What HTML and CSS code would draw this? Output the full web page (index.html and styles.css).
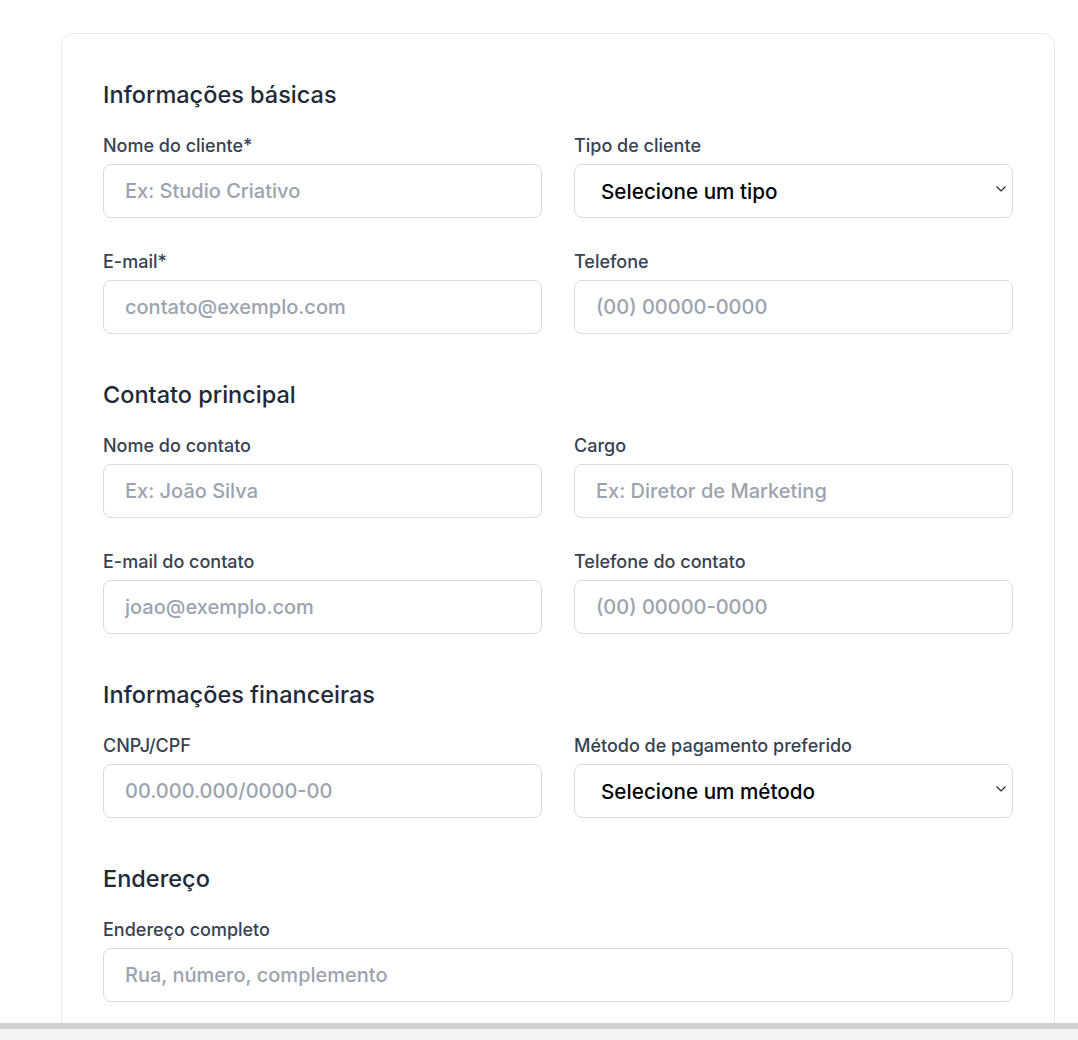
FILE: index.html
```html
<!DOCTYPE html>
<html lang="pt-BR">
<head>
<meta charset="utf-8">
<title>Novo cliente</title>
<link rel="stylesheet" href="styles.css">
</head>
<body>
<main class="card">
  <section class="section">
    <h2 class="section-title">Informações básicas</h2>
    <div class="grid">
      <div class="field">
        <label class="label">Nome do cliente*</label>
        <input class="input" type="text" placeholder="Ex: Studio Criativo">
      </div>
      <div class="field">
        <label class="label">Tipo de cliente</label>
        <div class="select-wrap">
          <select class="select"><option>Selecione um tipo</option></select>
          <svg class="chevron" width="10" height="6" viewBox="0 0 10 6"><path d="M0.5 0.5 L5 5 L9.5 0.5" fill="none" stroke="#222" stroke-width="1.1"/></svg>
        </div>
      </div>
      <div class="field">
        <label class="label">E-mail*</label>
        <input class="input" type="text" placeholder="contato@exemplo.com">
      </div>
      <div class="field">
        <label class="label">Telefone</label>
        <input class="input" type="text" placeholder="(00) 00000-0000">
      </div>
    </div>
  </section>
  <section class="section">
    <h2 class="section-title">Contato principal</h2>
    <div class="grid">
      <div class="field">
        <label class="label">Nome do contato</label>
        <input class="input" type="text" placeholder="Ex: João Silva">
      </div>
      <div class="field">
        <label class="label">Cargo</label>
        <input class="input" type="text" placeholder="Ex: Diretor de Marketing">
      </div>
      <div class="field">
        <label class="label">E-mail do contato</label>
        <input class="input" type="text" placeholder="joao@exemplo.com">
      </div>
      <div class="field">
        <label class="label">Telefone do contato</label>
        <input class="input" type="text" placeholder="(00) 00000-0000">
      </div>
    </div>
  </section>
  <section class="section">
    <h2 class="section-title">Informações financeiras</h2>
    <div class="grid">
      <div class="field">
        <label class="label">CNPJ/CPF</label>
        <input class="input" type="text" placeholder="00.000.000/0000-00">
      </div>
      <div class="field">
        <label class="label">Método de pagamento preferido</label>
        <div class="select-wrap">
          <select class="select"><option>Selecione um método</option></select>
          <svg class="chevron" width="10" height="6" viewBox="0 0 10 6"><path d="M0.5 0.5 L5 5 L9.5 0.5" fill="none" stroke="#222" stroke-width="1.1"/></svg>
        </div>
      </div>
    </div>
  </section>
  <section class="section">
    <h2 class="section-title">Endereço</h2>
    <div class="grid single">
      <div class="field">
        <label class="label">Endereço completo</label>
        <input class="input" type="text" placeholder="Rua, número, complemento">
      </div>
    </div>
  </section>
</main>
<div class="bottom-bar"></div>
</body>
</html>
```

FILE: styles.css
```css
* { box-sizing: border-box; }
html, body { margin: 0; padding: 0; background: #ffffff; }
body {
  font-family: Inter, "Noto Sans", sans-serif;
  color: #1f2937;
  padding-top: 33px;
  padding-left: 61px;
  height: 1040px;
  overflow: hidden;
}
.card {
  width: 994px;
  border: 1px solid #e9eaec;
  border-radius: 12px;
  padding: 45px 41px 40px 41px;
  background: #fff;
}
.section + .section { margin-top: 45px; }
.section-title {
  margin: 0 0 24px 0;
  font-size: 23.5px;
  line-height: 31px;
  font-weight: 500;
  color: #1f2937;
}
.grid {
  display: grid;
  grid-template-columns: 1fr 1fr;
  column-gap: 32px;
  row-gap: 32px;
}
.grid.single { grid-template-columns: 1fr; }
.field { display: flex; flex-direction: column; }
.label {
  font-size: 18px;
  line-height: 24px;
  font-weight: 500;
  color: #374151;
  margin-bottom: 6px;
}
.input, .select {
  width: 100%;
  height: 54px;
  border: 1px solid #d8dbe0;
  border-radius: 8px;
  background: #fff;
  font-family: Inter, "Noto Sans", sans-serif;
  font-size: 20px;
  font-weight: 500;
  padding: 0 21px;
  color: #111827;
  outline: none;
}
.input::placeholder { color: #9ca3af; }
.select-wrap { position: relative; }
.select {
  appearance: none;
  -webkit-appearance: none;
  font-size: 20.7px;
  font-weight: 500;
  color: #000;
  padding-left: 26px;
  padding-right: 30px;
}
.chevron {
  position: absolute;
  right: 7px;
  top: 22px;
  pointer-events: none;
}
.bottom-bar {
  position: fixed;
  left: 0;
  right: 0;
  bottom: 0;
  height: 17px;
  background: #f4f4f4;
  border-top: 6px solid #d1d1d1;
}
```
